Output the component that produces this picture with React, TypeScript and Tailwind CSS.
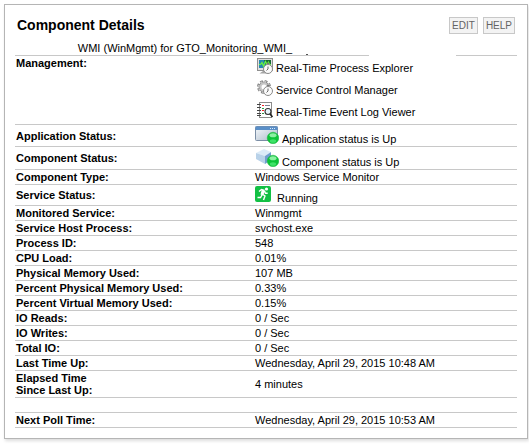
import React from "react";

const Clock = () => (
  <>
    <path d="M10 4.8h2v1.5h-2z" fill="#777" />
    <circle cx="11" cy="11" r="4.5" fill="#fbfbfb" stroke="#8a8a8a" />
    <path d="M11 8.5V11l-1.5 1.5" fill="none" stroke="#555" strokeWidth="0.9" />
  </>
);

const ProcessIcon = () => (
  <svg width="16" height="16" viewBox="0 0 16 16" className="shrink-0" aria-hidden="true">
    <rect x="0.5" y="0.5" width="15" height="12" fill="#e2e2e2" stroke="#8f8f8f" />
    <rect x="2" y="2" width="12" height="8" fill="#2588b0" />
    <path d="M7 2h7v8h-4z" fill="#176a36" />
    <path d="M2 6.5h1.5l1.5-2 1.5 3.5 2-4.5 1.5 3 1.5-2.5 1 2.5h1.5" fill="none" stroke="#6af53c" strokeWidth="1.2" />
    <path d="M2.5 15.5h8v-2.5H6z" fill="#a5a5a5" />
    <Clock />
  </svg>
);

const ServiceIcon = () => (
  <svg width="16" height="16" viewBox="0 0 16 16" className="shrink-0" aria-hidden="true">
    <circle cx="7" cy="7" r="5.6" fill="none" stroke="#858585" strokeWidth="2.8" strokeDasharray="2.6 1.8" />
    <circle cx="7" cy="7" r="3.8" fill="#fff" stroke="#858585" strokeWidth="3.2" />
    <circle cx="7" cy="7" r="5.4" fill="none" stroke="#c6c6c6" strokeWidth="1.6" strokeDasharray="1.6 2.64" />
    <circle cx="7" cy="7" r="3.6" fill="#fff" stroke="#c6c6c6" strokeWidth="2.2" />
    <Clock />
  </svg>
);

const LogIcon = () => (
  <svg width="16" height="16" viewBox="0 0 16 16" className="shrink-0" aria-hidden="true">
    <rect x="2.5" y="0.5" width="12" height="15" fill="#fff" stroke="#8b8b8b" />
    <path d="M0 2.5h4M0 5.5h4M0 8.5h4M0 11.5h4M0 13.5h4" stroke="#444" />
    <path d="M5 3.5h2M5 8.5h2" stroke="#ff2020" />
    <path d="M5 6.5h2" stroke="#2aa64a" />
    <path d="M5 11.5h2" stroke="#2f8f3f" />
    <path d="M8 3.5h5" stroke="#7a8190" />
    <circle cx="11" cy="9.5" r="3" fill="#eaf5fd" stroke="#333" strokeWidth="1.1" />
    <path d="M13 12l2.5 3" stroke="#222" strokeWidth="1.6" />
  </svg>
);

const Ball = () => (
  <>
    <circle cx="18" cy="12" r="5.8" fill="#0cc438" stroke="#22b544" strokeWidth="0.5" />
    <ellipse cx="18" cy="9.3" rx="3.5" ry="2" fill="#8cf0a2" />
    <ellipse cx="18" cy="15" rx="3.2" ry="1.8" fill="#3fe268" />
  </>
);

const AppIcon = () => (
  <svg width="24" height="18" viewBox="0 0 24 18" className="shrink-0" aria-hidden="true">
    <defs>
      <linearGradient id="pane" x2="1" y2="1">
        <stop stopColor="#f6fafd" />
        <stop offset="1" stopColor="#a9b8c8" />
      </linearGradient>
    </defs>
    <rect x="0.5" y="0.5" width="22" height="14" rx="1" fill="url(#pane)" stroke="#7b8ea5" />
    <path d="M0.5 0.5h22v3.5h-22z" fill="#5a8fc8" />
    <path d="M15 2.5h1m1 0h1m1 0h1" stroke="#d9ecff" />
    <Ball />
  </svg>
);

const ComponentIcon = () => (
  <svg width="24" height="18" viewBox="0 0 24 18" className="shrink-0" aria-hidden="true">
    <path d="M1 4l8-4 7 3-6 4z" fill="#dcebf8" />
    <path d="M1 4l9 3v8l-9-5z" fill="#b9d2e9" />
    <path d="M10 7l6-4v8l-6 4z" fill="#709fce" />
    <Ball />
  </svg>
);

const RunningIcon = () => (
  <svg width="16" height="16" viewBox="0 0 16 16" className="shrink-0" aria-hidden="true">
    <rect width="16" height="16" rx="2" fill="#12c044" />
    <circle cx="11.5" cy="3" r="1.6" fill="#fff" />
    <path d="M4 5.5L6.5 3.5l3 1M7 9l-1.5 2.5H2.5M8 8.5l2 1.5-1.5 4M9.5 5l1 2.3h2.2" fill="none" stroke="#fff" strokeWidth="1.4" />
    <path d="M6.8 3.5l3.4 1.5-2.2 4.5-2.5-1z" fill="#fff" />
  </svg>
);

const tools = [
  { name: "Real-Time Process Explorer", icon: <ProcessIcon /> },
  { name: "Service Control Manager", icon: <ServiceIcon /> },
  { name: "Real-Time Event Log Viewer", icon: <LogIcon /> },
];

const details = [
  { label: "Monitored Service:", value: "Winmgmt" },
  { label: "Service Host Process:", value: "svchost.exe" },
  { label: "Process ID:", value: "548" },
  { label: "CPU Load:", value: "0.01%" },
  { label: "Physical Memory Used:", value: "107 MB" },
  { label: "Percent Physical Memory Used:", value: "0.33%" },
  { label: "Percent Virtual Memory Used:", value: "0.15%" },
  { label: "IO Reads:", value: "0 / Sec" },
  { label: "IO Writes:", value: "0 / Sec" },
  { label: "Total IO:", value: "0 / Sec" },
  { label: "Last Time Up:", value: "Wednesday, April 29, 2015 10:48 AM" },
];

function Row({ label, children }: { label: React.ReactNode; children?: React.ReactNode }) {
  return (
    <tr className="border-b border-[#c8c8c8]">
      <th scope="row" className="pl-px text-left align-middle font-bold">{label}</th>
      <td className="align-middle">{children}</td>
    </tr>
  );
}

export default function App() {
  return (
    <div className="pt-1 pr-px pb-2 pl-1 bg-white font-['Liberation_Sans',Arial,sans-serif] text-[11px] leading-[14px] text-black">
      <section className="border border-[#b5b5b5] bg-white px-2.5 pb-2.5 shadow-[1px_2px_3px_#ddd]">
        <header className="flex items-start justify-between px-0.5 pt-3">
          <h1 className="text-sm leading-4 font-bold">Component Details</h1>
          <div className="flex gap-[5px] text-[10px] leading-[15px] text-[#636363]">
            <button className="border border-[#c8c8c8] bg-[#f3f3f3] px-0.5">EDIT</button>
            <button className="border border-[#c8c8c8] bg-[#f3f3f3] px-0.5">HELP</button>
          </div>
        </header>

        <table className="mt-[7px] w-full border-collapse">
          <colgroup>
            <col className="w-[240px]" />
            <col />
          </colgroup>
          <tbody>
            <tr className="border-b border-[#c8c8c8]">
              <td colSpan={2}>
                <div className="flex justify-center">
                  <span>WMI (WinMgmt) for GTO_Monitoring_WMI_</span>
                  {/* rest of the name is masked */}
                  <span className="relative w-[162px]">
                    <span className="absolute bottom-0 left-3.5 h-px w-0.5 bg-neutral-600" />
                    <span className="absolute -right-0.5 -bottom-1 h-4 w-[87px] bg-white" />
                  </span>
                </div>
              </td>
            </tr>
            <tr className="border-b border-[#c8c8c8]">
              <th scope="row" className="pl-px text-left align-top font-bold">Management:</th>
              <td>
                <ul className="flex flex-col gap-[5px] pt-0.5 pb-[5px] pl-0.5">
                  {tools.map((tool) => (
                    <li key={tool.name} className="flex items-start gap-[3px]">
                      {tool.icon}
                      <span className="pt-[3px]">{tool.name}</span>
                    </li>
                  ))}
                </ul>
              </td>
            </tr>
            <Row label="Application Status:">
              <div className="flex items-end gap-[3px] pt-px pb-0.5">
                <AppIcon />
                <span className="-mb-0.5">Application status is Up</span>
              </div>
            </Row>
            <Row label="Component Status:">
              <div className="flex items-end gap-[3px] pt-0.5 pb-0.5">
                <ComponentIcon />
                <span className="-mb-0.5">Component status is Up</span>
              </div>
            </Row>
            <Row label="Component Type:">Windows Service Monitor</Row>
            <Row label="Service Status:">
              <div className="flex items-start gap-1.5 pt-px">
                <RunningIcon />
                <span className="pt-[5px]">Running</span>
              </div>
            </Row>
            {details.map((item) => (
              <Row key={item.label} label={item.label}>{item.value}</Row>
            ))}
            <Row label={<span className="block py-px leading-3">Elapsed Time<br />Since Last Up:</span>}>4 minutes</Row>
            <Row label={<>&nbsp;</>} />
            <Row label="Next Poll Time:">Wednesday, April 29, 2015 10:53 AM</Row>
          </tbody>
        </table>
      </section>
    </div>
  );
}
